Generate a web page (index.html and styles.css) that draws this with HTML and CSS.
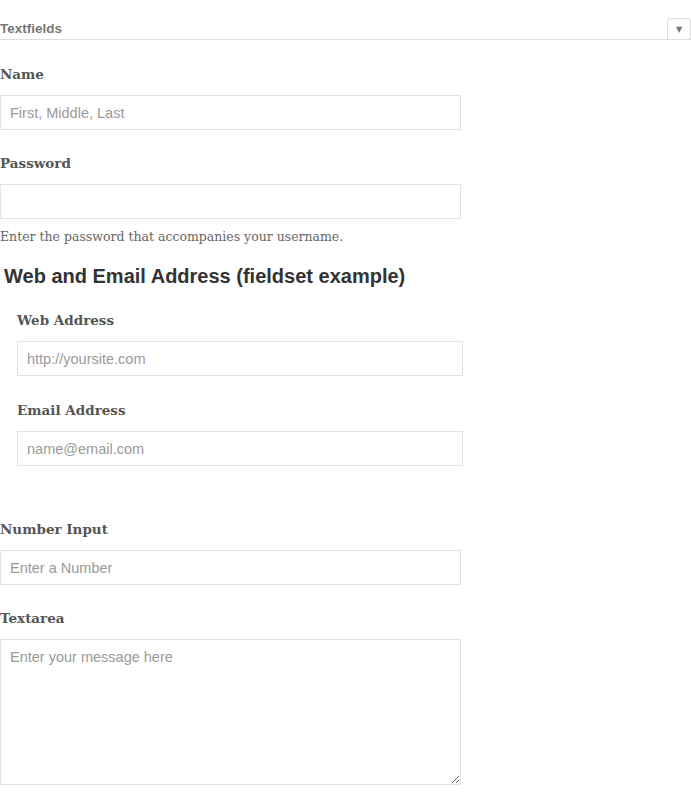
FILE: index.html
```html
<!DOCTYPE html>
<html>
<head>
<meta charset="utf-8">
<link rel="stylesheet" href="styles.css">
</head>
<body>
<div class="bar">
  <span class="bar-title">Textfields</span>
  <span class="bar-toggle">▼</span>
</div>
<form class="form">
  <div class="field">
    <label class="label">Name</label>
    <input class="input" type="text" placeholder="First, Middle, Last">
  </div>
  <div class="field">
    <label class="label">Password</label>
    <input class="input" type="password">
    <p class="help">Enter the password that accompanies your username.</p>
  </div>
  <fieldset class="fieldset">
    <legend class="legend">Web and Email Address (fieldset example)</legend>
    <div class="field field-first">
      <label class="label">Web Address</label>
      <input class="input wide" type="text" placeholder="http://yoursite.com">
    </div>
    <div class="field field-next">
      <label class="label">Email Address</label>
      <input class="input wide" type="text" placeholder="name@email.com">
    </div>
  </fieldset>
  <div class="field">
    <label class="label">Number Input</label>
    <input class="input" type="text" placeholder="Enter a Number">
  </div>
  <div class="field">
    <label class="label">Textarea</label>
    <textarea class="input area" placeholder="Enter your message here"></textarea>
  </div>
</form>
</body>
</html>
```
FILE: styles.css
```css
html, body {
  margin: 0;
  padding: 0;
  background: #fff;
}
body {
  font-family: "DejaVu Serif", serif;
  color: #555;
}
.bar {
  display: flex;
  justify-content: space-between;
  align-items: flex-end;
  height: 40px;
  border-bottom: 1px solid #ddd;
  box-sizing: border-box;
  margin-bottom: 1px;
}
.bar-title {
  font-family: "Liberation Sans", sans-serif;
  font-weight: bold;
  font-size: 13.5px;
  color: #777;
  padding-bottom: 3px;
}
.bar-toggle {
  width: 24px;
  height: 21px;
  box-sizing: border-box;
  border: 1px solid #ddd;
  border-bottom: none;
  border-radius: 4px 4px 0 0;
  font-size: 8px;
  color: #777;
  display: flex;
  align-items: center;
  justify-content: center;
  font-family: "DejaVu Sans", sans-serif;
}
.form {
  margin: 0;
}
.field {
  display: flex;
  flex-direction: column;
  align-items: flex-start;
}
.label {
  font-weight: bold;
  font-size: 13.5px;
  color: #555;
  margin-top: 23px;
  line-height: 20px;
  margin-bottom: 11px;
}
.field-first .label {
  margin-top: 22px;
}
.field-next .label {
  margin-top: 24px;
}
.input {
  width: 461px;
  height: 35px;
  box-sizing: border-box;
  border: 1px solid #e3e3e3;
  padding: 0 9px;
  font-family: "Liberation Sans", sans-serif;
  font-size: 14.5px;
  color: #333;
  margin: 0;
  background: #fff;
  border-radius: 0;
  outline: none;
}
.input::placeholder {
  color: #9a9a9a;
}
.wide {
  width: 446px;
}
.help {
  margin: 9px 0 0;
  font-size: 12.5px;
  line-height: 18px;
  color: #666;
}
.fieldset {
  border: none;
  margin: 0;
  padding: 0 0 30px 17px;
}
.legend {
  font-family: "Liberation Sans", sans-serif;
  font-weight: bold;
  font-size: 20px;
  color: #333;
  padding: 0;
  margin: 0 0 0 -13px;
  padding-top: 19px;
}
.area {
  height: 146px;
  padding: 9px;
  resize: vertical;
}
```
